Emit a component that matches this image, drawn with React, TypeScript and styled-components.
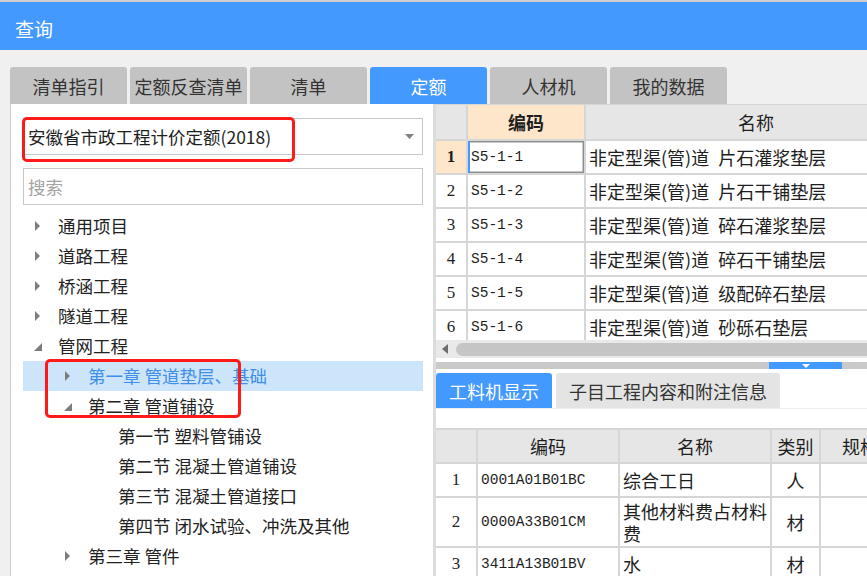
import React from 'react';
import styled, { createGlobalStyle } from 'styled-components';

const CJK = '"Noto Sans CJK SC", "Microsoft YaHei", sans-serif';
const MONO = '"Liberation Mono", "Noto Sans CJK SC", monospace';
const SERIF = '"Liberation Serif", serif';
const BLUE = '#4499ff';
const LINE = '#d6d6d6';

const Global = createGlobalStyle`
  html, body { margin: 0; padding: 0; background: #f0f0f0; }
  body { font-family: ${CJK}; }
  * { box-sizing: border-box; }
`;

const Window = styled.div`
  width: 867px;
  height: 576px;
  overflow: hidden;
  display: flex;
  flex-direction: column;
  background: #f0f0f0;
`;

const TitleBar = styled.div`
  height: 50px;
  flex-shrink: 0;
  border-top: 2px solid #cfcfcf;
  background: ${BLUE};
  color: #fff;
  font-size: 19px;
  line-height: 1;
  padding: 4px 0 0 15px;
  display: flex;
  align-items: center;
`;

const Body = styled.div`
  flex: 1;
  min-height: 0;
  display: flex;
  flex-direction: column;
  padding-left: 10px;
`;

const TabRow = styled.div`
  display: flex;
  gap: 3px;
  margin-top: 17px;
  height: 37px;
  flex-shrink: 0;
`;

const Tab = styled.div<{ $active?: boolean }>`
  width: 117px;
  flex-shrink: 0;
  border-radius: 3px 3px 0 0;
  background: ${(p) => (p.$active ? BLUE : '#c3c3c3')};
  color: ${(p) => (p.$active ? '#fff' : '#333')};
  font-size: 18px;
  line-height: 1;
  display: flex;
  align-items: center;
  justify-content: center;
`;

const Main = styled.div`
  flex: 1;
  min-height: 0;
  display: flex;
`;

const LeftPanel = styled.div`
  width: 423px;
  flex-shrink: 0;
  background: #fff;
  border-left: 1px solid #cfcfcf;
  position: relative;
  padding: 14px 10px 0 12px;
  display: flex;
  flex-direction: column;
`;

const Splitter = styled.div`
  width: 3px;
  flex-shrink: 0;
  background: #dcdcdc;
`;

const Dropdown = styled.div`
  height: 37px;
  border: 1px solid #c9c9c9;
  padding: 0 8px 0 4px;
  display: flex;
  align-items: center;
  justify-content: space-between;
  font-size: 17.5px;
  color: #1e1e1e;
  line-height: 1;
`;

const SearchBox = styled.input`
  margin-top: 13px;
  height: 37px;
  border: 1px solid #c9c9c9;
  padding: 0 0 0 4px;
  font-family: ${CJK};
  font-size: 17.5px;
  color: #333;
  outline: none;
  &::placeholder { color: #a3a3a3; }
`;

const Tree = styled.div`
  margin-top: 6px;
  display: flex;
  flex-direction: column;
`;

const TreeRow = styled.div<{ $level: number; $selected?: boolean }>`
  height: 30px;
  display: flex;
  align-items: center;
  padding-left: ${(p) => 10 + p.$level * 30}px;
  background: ${(p) => (p.$selected ? '#cce5fa' : 'transparent')};
  color: ${(p) => (p.$selected ? '#3f8ee8' : '#222')};
  font-size: 17.5px;
  line-height: 1;
  white-space: nowrap;
`;

const ArrowBox = styled.span`
  width: 25px;
  flex-shrink: 0;
  display: flex;
  align-items: center;
`;

const RedMark = styled.div<{ $top: number; $left: number; $w: number; $h: number }>`
  position: absolute;
  top: ${(p) => p.$top}px;
  left: ${(p) => p.$left}px;
  width: ${(p) => p.$w}px;
  height: ${(p) => p.$h}px;
  border: 3px solid #ff1a1a;
  border-radius: 5px;
  pointer-events: none;
`;

const RightPanel = styled.div`
  flex: 1;
  min-width: 0;
  background: #fff;
  display: flex;
  flex-direction: column;
  overflow: hidden;
`;

const TopViewport = styled.div`
  height: 236px;
  flex-shrink: 0;
  overflow: hidden;
  padding-top: 1px;
  background: ${LINE};
`;

const Grid = styled.div<{ $cols: string; $rows: string }>`
  display: grid;
  grid-template-columns: ${(p) => p.$cols};
  grid-template-rows: ${(p) => p.$rows};
  grid-auto-rows: 32px;
  gap: 2px;
  background: ${LINE};
  width: max-content;
`;

const Cell = styled.div<{
  $head?: boolean;
  $orange?: boolean;
  $center?: boolean;
  $mono?: boolean;
  $bold?: boolean;
  $num?: boolean;
  $focus?: boolean;
}>`
  background: ${(p) => (p.$orange ? '#fde6c9' : p.$head ? '#e6e6e6' : '#fff')};
  display: flex;
  align-items: center;
  justify-content: ${(p) => (p.$center || p.$head || p.$num ? 'center' : 'flex-start')};
  padding: ${(p) => (p.$center || p.$head || p.$num ? '0' : '0 3px')};
  font-family: ${(p) => (p.$mono ? MONO : p.$num ? SERIF : CJK)};
  font-size: ${(p) => (p.$mono ? '14.5px' : p.$num ? '17px' : '18px')};
  font-weight: ${(p) => (p.$bold ? 700 : 400)};
  color: #1e1e1e;
  line-height: 22px;
  white-space: pre-wrap;
  overflow: hidden;
  box-shadow: ${(p) => (p.$focus ? `inset 2px 0 0 ${BLUE}, inset 0 0 0 1.5px #8f8f8f` : 'none')};
`;

const ScrollBar = styled.div`
  height: 18px;
  flex-shrink: 0;
  background: #e9e9e9;
  display: flex;
  align-items: center;
`;

const ScrollArrow = styled.span`
  width: 20px;
  flex-shrink: 0;
  display: flex;
  align-items: center;
  padding-left: 6px;
`;

const ScrollThumb = styled.div`
  flex: 1;
  height: 13px;
  border-radius: 7px;
  background: #c5c5c5;
  margin-right: -10px;
`;

const SplitBar = styled.div`
  margin-top: 4px;
  height: 7px;
  flex-shrink: 0;
  background: #c9c9c9;
  display: flex;
  padding-left: 333px;
`;

const SplitHandle = styled.div`
  width: 73px;
  background: ${BLUE};
  display: flex;
  align-items: center;
  justify-content: center;
`;

const BottomPanel = styled.div`
  flex: 1;
  min-height: 0;
  background: #fff;
  padding-top: 4px;
  display: flex;
  flex-direction: column;
`;

const BottomTabs = styled.div`
  display: flex;
  gap: 4px;
  height: 35px;
  flex-shrink: 0;
`;

const BTab = styled.div<{ $active?: boolean; $w: number }>`
  width: ${(p) => p.$w}px;
  flex-shrink: 0;
  border-radius: 3px 3px 0 0;
  background: ${(p) => (p.$active ? BLUE : '#e4e4e4')};
  color: ${(p) => (p.$active ? '#fff' : '#333')};
  font-size: 18px;
  line-height: 1;
  display: flex;
  align-items: center;
  justify-content: center;
`;

const TabGap = styled.div`
  height: 20px;
  flex-shrink: 0;
  border-top: 1px solid #ececec;
`;

const BottomGridWrap = styled.div`
  padding-top: 2px;
  background: ${LINE};
  width: max-content;
`;

const CollapsedIcon = () => (
  <svg width="10" height="12" viewBox="0 0 10 12">
    <polygon points="2,1 7,6 2,11" fill="#7d7d7d" />
  </svg>
);

const ExpandedIcon = () => (
  <svg width="10" height="12" viewBox="0 0 10 12">
    <polygon points="9,3 9,11 1,11" fill="#7d7d7d" />
  </svg>
);

type Node = { text: string; level: number; state?: 'open' | 'closed'; selected?: boolean };

const nodes: Node[] = [
  { text: '通用项目', level: 0, state: 'closed' },
  { text: '道路工程', level: 0, state: 'closed' },
  { text: '桥涵工程', level: 0, state: 'closed' },
  { text: '隧道工程', level: 0, state: 'closed' },
  { text: '管网工程', level: 0, state: 'open' },
  { text: '第一章 管道垫层、基础', level: 1, state: 'closed', selected: true },
  { text: '第二章 管道铺设', level: 1, state: 'open' },
  { text: '第一节 塑料管铺设', level: 2 },
  { text: '第二节 混凝土管道铺设', level: 2 },
  { text: '第三节 混凝土管道接口', level: 2 },
  { text: '第四节 闭水试验、冲洗及其他', level: 2 },
  { text: '第三章 管件', level: 1, state: 'closed' },
];

const quotaRows = [
  ['S5-1-1', '非定型渠(管)道\u2002片石灌浆垫层'],
  ['S5-1-2', '非定型渠(管)道\u2002片石干铺垫层'],
  ['S5-1-3', '非定型渠(管)道\u2002碎石灌浆垫层'],
  ['S5-1-4', '非定型渠(管)道\u2002碎石干铺垫层'],
  ['S5-1-5', '非定型渠(管)道\u2002级配碎石垫层'],
  ['S5-1-6', '非定型渠(管)道\u2002砂砾石垫层'],
];

const materialRows = [
  ['0001A01B01BC', '综合工日', '人'],
  ['0000A33B01CM', '其他材料费占材料费', '材'],
  ['3411A13B01BV', '水', '材'],
];

export default function App() {
  return (
    <Window>
      <Global />
      <TitleBar>查询</TitleBar>
      <Body>
        <TabRow>
          <Tab>清单指引</Tab>
          <Tab>定额反查清单</Tab>
          <Tab>清单</Tab>
          <Tab $active>定额</Tab>
          <Tab>人材机</Tab>
          <Tab>我的数据</Tab>
        </TabRow>
        <Main>
          <LeftPanel>
            <Dropdown>
              <span>安徽省市政工程计价定额(2018)</span>
              <svg width="9" height="5" viewBox="0 0 9 5">
                <polygon points="0,0 9,0 4.5,5" fill="#808080" />
              </svg>
            </Dropdown>
            <SearchBox placeholder="搜索" />
            <Tree>
              {nodes.map((n) => (
                <TreeRow key={n.text} $level={n.level} $selected={n.selected}>
                  <ArrowBox>
                    {n.state === 'closed' && <CollapsedIcon />}
                    {n.state === 'open' && <ExpandedIcon />}
                  </ArrowBox>
                  {n.text}
                </TreeRow>
              ))}
            </Tree>
            <RedMark $top={13} $left={11} $w={273} $h={45} />
            <RedMark $top={255} $left={34} $w={196} $h={59} />
          </LeftPanel>
          <Splitter />
          <RightPanel>
            <TopViewport>
              <Grid $cols="30px 116px 340px" $rows="34px">
                <Cell $head />
                <Cell $head $orange $bold>编码</Cell>
                <Cell $head>名称</Cell>
                {quotaRows.map(([code, name], i) => (
                  <React.Fragment key={code}>
                    <Cell $num $orange={i === 0} $bold={i === 0}>{i + 1}</Cell>
                    <Cell $mono $focus={i === 0}>{code}</Cell>
                    <Cell>{name}</Cell>
                  </React.Fragment>
                ))}
              </Grid>
            </TopViewport>
            <ScrollBar>
              <ScrollArrow>
                <svg width="6" height="10" viewBox="0 0 6 10">
                  <polygon points="6,0 6,10 0,5" fill="#6e6e6e" />
                </svg>
              </ScrollArrow>
              <ScrollThumb />
            </ScrollBar>
            <SplitBar>
              <SplitHandle>
                <svg width="8" height="4" viewBox="0 0 8 4">
                  <polygon points="0,0 8,0 4,4" fill="#fff" />
                </svg>
              </SplitHandle>
            </SplitBar>
            <BottomPanel>
              <BottomTabs>
                <BTab $active $w={116}>工料机显示</BTab>
                <BTab $w={224}>子目工程内容和附注信息</BTab>
              </BottomTabs>
              <TabGap />
              <BottomGridWrap>
                <Grid $cols="40px 140px 150px 47px 78px 100px" $rows="32px 32px 48px 32px">
                  <Cell $head />
                  <Cell $head>编码</Cell>
                  <Cell $head>名称</Cell>
                  <Cell $head>类别</Cell>
                  <Cell $head>规格</Cell>
                  <Cell $head />
                  {materialRows.map(([code, name, kind], i) => (
                    <React.Fragment key={code}>
                      <Cell $num>{i + 1}</Cell>
                      <Cell $mono>{code}</Cell>
                      <Cell>{name}</Cell>
                      <Cell $center>{kind}</Cell>
                      <Cell />
                      <Cell />
                    </React.Fragment>
                  ))}
                </Grid>
              </BottomGridWrap>
            </BottomPanel>
          </RightPanel>
        </Main>
      </Body>
    </Window>
  );
}
